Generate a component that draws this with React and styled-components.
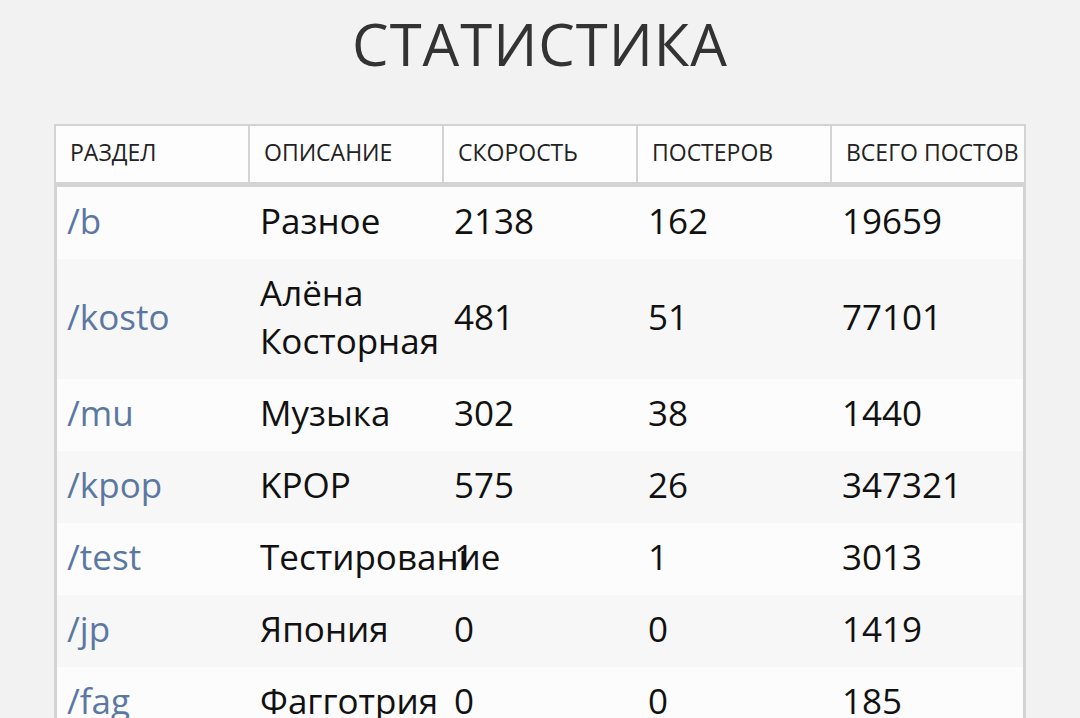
import React from 'react'
import styled, { createGlobalStyle } from 'styled-components'

const rows = [
  { board: '/b', desc: 'Разное', speed: '2138', posters: '162', total: '19659' },
  { board: '/kosto', desc: 'Алёна Косторная', speed: '481', posters: '51', total: '77101' },
  { board: '/mu', desc: 'Музыка', speed: '302', posters: '38', total: '1440' },
  { board: '/kpop', desc: 'KPOP', speed: '575', posters: '26', total: '347321' },
  { board: '/test', desc: 'Тестирование', speed: '1', posters: '1', total: '3013' },
  { board: '/jp', desc: 'Япония', speed: '0', posters: '0', total: '1419' },
  { board: '/fag', desc: 'Фагготрия', speed: '0', posters: '0', total: '185' },
]

const heads = ['Раздел', 'Описание', 'Скорость', 'Постеров', 'Всего постов']

const GlobalStyle = createGlobalStyle`
  html, body {
    margin: 0;
    background: #f2f2f2;
    font-family: "Open Sans", "Liberation Sans", sans-serif;
  }
`

const Page = styled.div`
  display: flex;
  flex-direction: column;
  align-items: center;
  padding-top: 9px;
`

const Title = styled.h1`
  margin: 0 0 45px;
  font-size: 58px;
  line-height: 70px;
  font-weight: 400;
  letter-spacing: 1px;
  color: #333;
  text-transform: uppercase;
`

const Table = styled.table`
  width: 972px;
  table-layout: fixed;
  border-collapse: separate;
  border-spacing: 0;
`

const Col = styled.col`
  width: ${p => (p.$first ? '196px' : '194px')};
`

const Th = styled.th`
  background: #fdfdfd;
  border-top: 2px solid #d3d3d3;
  border-right: 2px solid #d3d3d3;
  border-bottom: 2px solid #d3d3d3;
  border-left: ${p => (p.$first ? '2px solid #d3d3d3' : '0')};
  padding: 12px 14px 16px;
  font-size: 23px;
  line-height: 28px;
  font-weight: 400;
  color: #222;
  text-align: left;
  text-transform: uppercase;
  white-space: nowrap;
  overflow: hidden;
`

const Tr = styled.tr`
  background: ${p => (p.$alt ? '#f7f7f7' : '#fcfcfc')};
`

const Td = styled.td`
  padding: 10px 10px 14px;
  font-size: 35px;
  line-height: 48px;
  color: #111;
  vertical-align: middle;
  border-top: ${p => (p.$top ? '3px solid #d3d3d3' : '0')};
  border-left: ${p => (p.$first ? '3px solid #d3d3d3' : '0')};
  border-right: ${p => (p.$last ? '3px solid #d3d3d3' : '0')};
`

const Link = styled.a`
  color: #5b78a3;
  text-decoration: none;
`

export default function App() {
  return (
    <Page>
      <GlobalStyle />
      <Title>Статистика</Title>
      <Table>
        <colgroup>
          {heads.map((h, i) => (
            <Col key={h} $first={i === 0} />
          ))}
        </colgroup>
        <thead>
          <tr>
            {heads.map((h, i) => (
              <Th key={h} $first={i === 0}>{h}</Th>
            ))}
          </tr>
        </thead>
        <tbody>
          {rows.map((r, i) => (
            <Tr key={r.board} $alt={i % 2 === 1}>
              <Td $top={i === 0} $first><Link href="#">{r.board}</Link></Td>
              <Td $top={i === 0}>{r.desc}</Td>
              <Td $top={i === 0}>{r.speed}</Td>
              <Td $top={i === 0}>{r.posters}</Td>
              <Td $top={i === 0} $last>{r.total}</Td>
            </Tr>
          ))}
        </tbody>
      </Table>
    </Page>
  )
}
